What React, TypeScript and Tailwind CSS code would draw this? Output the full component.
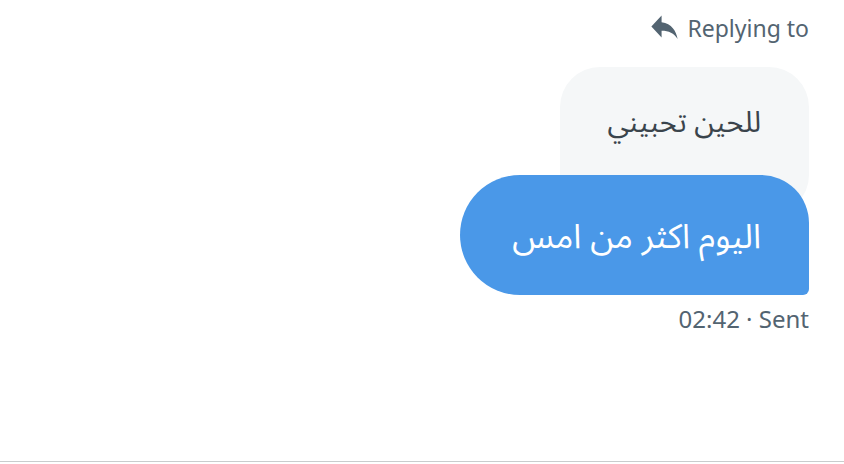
import React from "react";

export default function App() {
  const font = { fontFamily: '"Noto Sans", "Noto Sans Arabic", "DejaVu Sans", sans-serif' };
  return (
    <div className="w-[844px] h-[464px] bg-white flex flex-col overflow-hidden" style={font}>
      <div className="flex-1 flex flex-col items-end pr-[35px]">
        <div className="flex items-center gap-[5px] pt-[12px] h-[44px] text-[#536471]">
          <svg width="35" height="38" viewBox="0 0 24 26" fill="#536471" preserveAspectRatio="none">
            <path d="M10 9V4.5l-7 7.5 7 7.5v-4.6c5 0 8.5 1.6 11 5.6-1-5.5-4-10.5-11-11.5z" />
          </svg>
          <span className="text-[23px] leading-[30px]">Replying to</span>
        </div>
        <div
          dir="rtl"
          className="mt-[23px] h-[148px] w-[249px] rounded-[40px] bg-[#f5f7f8] pt-[34px] pr-[48px] text-[29px] leading-[40px] text-[#3a444c]"
        >
          للحين تحبيني
        </div>
        <div
          dir="rtl"
          className="-mt-[40px] h-[120px] flex items-center rounded-l-[60px] rounded-tr-[48px] rounded-br-[6px] bg-[#4a98e8] pl-[52px] pr-[48px] text-[34px] leading-[44px] text-white"
        >
          اليوم اكثر من امس
        </div>
        <div className="mt-[9px] text-[24px] leading-[30px] text-[#536471]">02:42 · Sent</div>
      </div>
      <div className="h-[1px] bg-[#c9cccd]" />
      <div className="h-[2px] bg-white" />
    </div>
  );
}
